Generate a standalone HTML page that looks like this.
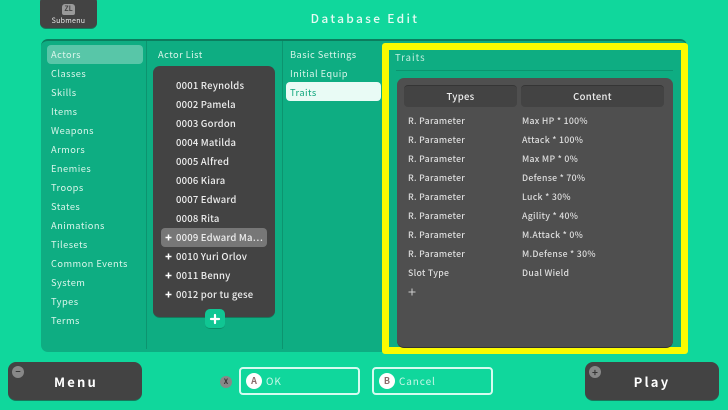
<!DOCTYPE html>
<html><head><meta charset="utf-8">
<style>
*{box-sizing:border-box;margin:0;padding:0}
html,body{width:728px;height:410px;overflow:hidden;background:#10d79c;font-family:"Noto Sans CJK JP","Liberation Sans",sans-serif;color:#fff}
.a{position:absolute}
.t{position:absolute;white-space:nowrap;line-height:14px;height:14px}
.side{font-size:9.3px;letter-spacing:.45px;color:#d8f5ea;left:51px}
.act{font-size:9.5px;letter-spacing:.2px;color:#eee;left:176px;font-weight:500}
.row{font-size:8.7px;letter-spacing:.3px;color:#ddd;font-weight:500}
.dark{background:#434343}
.btn{position:absolute;top:362px;width:134px;height:39px;background:#434343;border-radius:8px;border-bottom:1px solid #157a5c;font-size:13px;font-weight:700;letter-spacing:2.2px;text-align:center;line-height:39px;color:#fff}
.gc{position:absolute;width:12px;height:12px;border-radius:50%;background:#888;color:#333;font-size:8px;font-weight:700;line-height:12px;text-align:center}
.ob{position:absolute;top:367px;width:121px;height:28px;border:2px solid #d6fbf0;border-radius:4px;font-size:10px;letter-spacing:.9px;color:#c6f7e7;line-height:24px;padding-left:25px}
.oc{position:absolute;left:5px;top:4px;width:16px;height:16px;border-radius:50%;background:#fff;color:#8a6a6a;font-size:9px;font-weight:700;line-height:16px;text-align:center;letter-spacing:0}
.hd{position:absolute;top:85px;height:22px;background:#434343;border-radius:4px;border-top:1px solid #353535;font-size:9.5px;letter-spacing:.3px;line-height:20px;text-align:center;color:#eee;font-weight:500}
</style></head>
<body>
<div class="a dark" style="left:40px;top:-4px;width:57px;height:33px;border-radius:6px;border-bottom:1px solid #157a5c"></div>
<div class="a" style="left:62px;top:4px;width:13px;height:11px;border-radius:3px 3px 2px 2px;background:#9a9a9a;color:#444;font-size:7px;font-weight:700;line-height:11px;text-align:center">ZL</div>
<div class="t" style="left:40px;width:57px;top:14px;text-align:center;font-size:7px;letter-spacing:.3px;color:#e8e8e8">Submenu</div>
<div class="t" style="left:1px;width:728px;top:12px;text-align:center;font-size:12px;font-weight:500;letter-spacing:2.3px;color:#e4fbf3">Database Edit</div>

<div class="a" style="left:41px;top:39px;width:646px;height:313px;background:#0ead82;border-radius:7px;border-top:2px solid #0b7d5e"></div>
<div class="a" style="left:146px;top:41px;width:1px;height:308px;background:#0c946f"></div>
<div class="a" style="left:282px;top:41px;width:1px;height:308px;background:#0c946f"></div>
<div class="a" style="left:47px;top:45px;width:96px;height:19px;border-radius:4px;background:#58c6a8"></div>

<div class="t side" style="top:47px">Actors</div>
<div class="t side" style="top:66px">Classes</div>
<div class="t side" style="top:85px">Skills</div>
<div class="t side" style="top:104px">Items</div>
<div class="t side" style="top:123px">Weapons</div>
<div class="t side" style="top:142px">Armors</div>
<div class="t side" style="top:161px">Enemies</div>
<div class="t side" style="top:180px">Troops</div>
<div class="t side" style="top:199px">States</div>
<div class="t side" style="top:218px">Animations</div>
<div class="t side" style="top:237px">Tilesets</div>
<div class="t side" style="top:256px">Common Events</div>
<div class="t side" style="top:275px">System</div>
<div class="t side" style="top:294px">Types</div>
<div class="t side" style="top:313px">Terms</div>

<div class="t side" style="left:158px;top:47px">Actor List</div>
<div class="a dark" style="left:153px;top:66px;width:122px;height:252px;border-radius:7px;border-bottom:1px solid #157a5c"></div>
<div class="a" style="left:161px;top:228px;width:106px;height:19px;border-radius:4px;background:#777"></div>
<div class="t act" style="top:78px">0001 Reynolds</div>
<div class="t act" style="top:97px">0002 Pamela</div>
<div class="t act" style="top:116px">0003 Gordon</div>
<div class="t act" style="top:135px">0004 Matilda</div>
<div class="t act" style="top:154px">0005 Alfred</div>
<div class="t act" style="top:173px">0006 Kiara</div>
<div class="t act" style="top:192px">0007 Edward</div>
<div class="t act" style="top:211px">0008 Rita</div>
<svg class="a" style="left:165px;top:234px" width="7" height="7"><path d="M3.5 .5v6M.5 3.5h6" stroke="#fff" stroke-width="1.5"/></svg><div class="t act" style="top:230px">0009 Edward Ma⋯</div>
<svg class="a" style="left:165px;top:253px" width="7" height="7"><path d="M3.5 .5v6M.5 3.5h6" stroke="#fff" stroke-width="1.5"/></svg><div class="t act" style="top:249px">0010 Yuri Orlov</div>
<svg class="a" style="left:165px;top:272px" width="7" height="7"><path d="M3.5 .5v6M.5 3.5h6" stroke="#fff" stroke-width="1.5"/></svg><div class="t act" style="top:268px">0011 Benny</div>
<svg class="a" style="left:165px;top:291px" width="7" height="7"><path d="M3.5 .5v6M.5 3.5h6" stroke="#fff" stroke-width="1.5"/></svg><div class="t act" style="top:287px">0012 por tu gese</div>
<div class="a" style="left:205px;top:309px;width:20px;height:20px;border-radius:5px;background:#10c693;border-bottom:1px solid #0b8f6a"></div>
<svg class="a" style="left:205px;top:309px" width="20" height="20"><path d="M10 6v8M6 10h8" stroke="#fff" stroke-width="2.2" stroke-linecap="round"/></svg>

<div class="t side" style="left:290px;top:47px">Basic Settings</div>
<div class="t side" style="left:290px;top:66px">Initial Equip</div>
<div class="a" style="left:286px;top:82px;width:95px;height:19px;border-radius:4px;background:#e9fbf5"></div>
<div class="t side" style="left:290px;top:84.5px;color:#0fa67c">Traits</div>

<div class="a" style="left:382px;top:43px;width:306px;height:311px;border:7px solid #fbfb00;border-radius:3px"></div>
<div class="t side" style="left:395px;top:50px;font-size:9.5px;letter-spacing:1px;color:#c5efe0">Traits</div>
<div class="a" style="left:396px;top:70px;width:277px;height:1px;background:#0c946f"></div>
<div class="a" style="left:397px;top:78px;width:276px;height:270px;border-radius:7px;background:#4f4f4f;border-bottom:1px solid #333"></div>
<div class="hd" style="left:404px;width:113px">Types</div>
<div class="hd" style="left:521px;width:143px">Content</div>

<div class="t row" style="left:408px;top:114px">R. Parameter</div><div class="t row" style="left:522px;top:114px">Max HP * 100%</div>
<div class="t row" style="left:408px;top:133px">R. Parameter</div><div class="t row" style="left:522px;top:133px">Attack * 100%</div>
<div class="t row" style="left:408px;top:152px">R. Parameter</div><div class="t row" style="left:522px;top:152px">Max MP * 0%</div>
<div class="t row" style="left:408px;top:171px">R. Parameter</div><div class="t row" style="left:522px;top:171px">Defense * 70%</div>
<div class="t row" style="left:408px;top:190px">R. Parameter</div><div class="t row" style="left:522px;top:190px">Luck * 30%</div>
<div class="t row" style="left:408px;top:209px">R. Parameter</div><div class="t row" style="left:522px;top:209px">Agility * 40%</div>
<div class="t row" style="left:408px;top:228px">R. Parameter</div><div class="t row" style="left:522px;top:228px">M.Attack * 0%</div>
<div class="t row" style="left:408px;top:247px">R. Parameter</div><div class="t row" style="left:522px;top:247px">M.Defense * 30%</div>
<div class="t row" style="left:408px;top:266px">Slot Type</div><div class="t row" style="left:522px;top:266px">Dual Wield</div>
<svg class="a" style="left:408px;top:288px" width="8" height="8"><path d="M4 .5v7M.5 4h7" stroke="#ccc" stroke-width="1"/></svg>

<div class="btn" style="left:8px;padding-left:2px">Menu</div>
<div class="gc" style="left:12px;top:366px;font-size:9px">−</div>
<div class="btn" style="left:585px">Play</div>
<div class="gc" style="left:589px;top:366px;font-size:10px">+</div>
<div class="gc" style="left:220px;top:376px;font-size:7px">X</div>
<div class="ob" style="left:239px">OK<div class="oc">A</div></div>
<div class="ob" style="left:372px">Cancel<div class="oc">B</div></div>
</body></html>
